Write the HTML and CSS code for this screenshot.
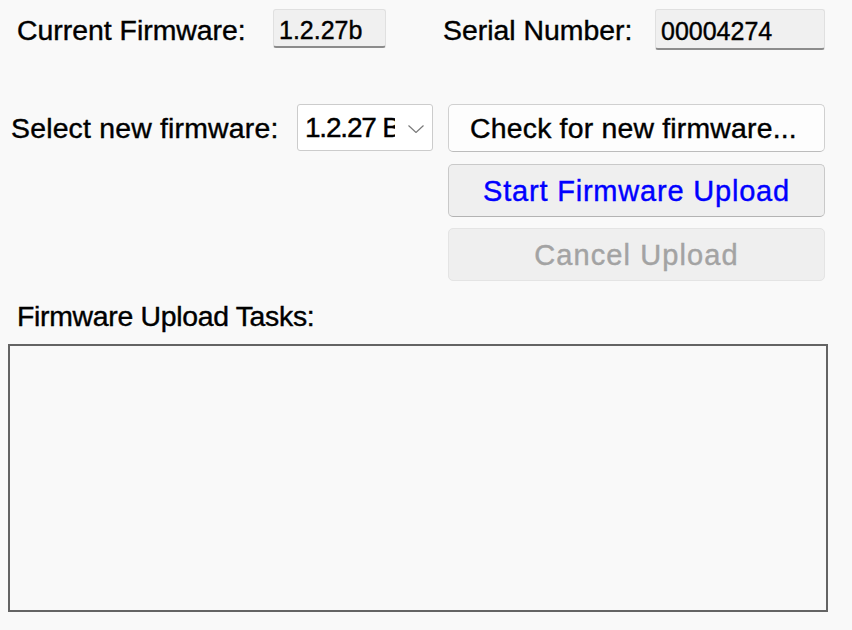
FILE: index.html
```html
<!DOCTYPE html>
<html>
<head>
<meta charset="utf-8">
<link rel="stylesheet" href="styles.css">
</head>
<body>
<div class="page">
  <div class="info-row">
    <div class="label cf-label">Current Firmware:</div>
    <div class="value value-fw">1.2.27b</div>
    <div class="label sn-label">Serial Number:</div>
    <div class="value value-sn">00004274</div>
  </div>

  <div class="select-row">
    <div class="select-group">
      <div class="label sel-label">Select new firmware:</div>
      <div class="select">
        <div class="select-text">1.2.27 Beta</div>
        <svg class="chevron" width="16" height="8" viewBox="0 0 16 8"><polyline points="0.5,0.5 8,7.5 15.5,0.5" fill="none" stroke="#7a7a7a" stroke-width="1.2"/></svg>
      </div>
    </div>
    <div class="buttons">
      <div class="btn btn-check">Check for new firmware...</div>
      <div class="btn btn-start">Start Firmware Upload</div>
      <div class="btn btn-cancel">Cancel Upload</div>
    </div>
  </div>

  <div class="label tasks-label">Firmware Upload Tasks:</div>
  <div class="tasks-box"></div>
</div>
</body>
</html>
```

FILE: styles.css
```css
html, body {
  margin: 0;
  padding: 0;
  background: #f9f9f9;
}
body {
  font-family: "Liberation Sans", Arial, sans-serif;
  color: #000;
  -webkit-text-stroke: 0.4px currentColor;
}
.page {
  width: 852px;
  height: 630px;
  box-sizing: border-box;
  padding-top: 9px;
  overflow: hidden;
}
.label {
  font-size: 28.4px;
  line-height: 32px;
  white-space: nowrap;
}
.info-row {
  display: grid;
  grid-template-columns: 256px 113px 269px 170px;
  align-items: start;
  padding-left: 17px;
  height: 41px;
}
.cf-label, .sn-label {
  padding-top: 5px;
}
.sn-label {
  padding-left: 57px;
}
.value {
  box-sizing: border-box;
  background: #f0f0f0;
  border: 1px solid #e0e0e0;
  border-bottom: 2px solid #8c8c8c;
  border-radius: 3px;
  font-size: 25px;
  line-height: 28px;
  padding-left: 5px;
  white-space: nowrap;
}
.value-fw {
  height: 39px;
  padding-top: 6px;
}
.value-sn {
  height: 41px;
  padding-top: 7px;
}
.select-row {
  display: flex;
  align-items: flex-start;
  margin-top: 54px;
}
.select-group {
  display: flex;
  align-items: center;
  height: 47px;
  padding-left: 11px;
}
.sel-label {
  width: 286px;
  letter-spacing: 0.2px;
}
.select {
  box-sizing: border-box;
  display: flex;
  align-items: center;
  width: 136px;
  height: 47px;
  background: #ffffff;
  border: 1px solid #cccccc;
  border-radius: 3px;
}
.select-text {
  margin-left: 7px;
  width: 90px;
  overflow: hidden;
  white-space: nowrap;
  font-size: 28px;
  line-height: 32px;
  letter-spacing: -1.2px;
}
.chevron {
  margin-left: 13px;
  margin-top: 3px;
}
.buttons {
  display: flex;
  flex-direction: column;
  margin-left: 15px;
  width: 377px;
}
.btn {
  box-sizing: border-box;
  display: flex;
  align-items: center;
  justify-content: center;
  border-radius: 5px;
  font-size: 28.4px;
  line-height: 32px;
  white-space: nowrap;
}
.btn-check {
  height: 48px;
  background: #fdfdfd;
  border: 1px solid #d0d0d0;
  border-bottom-color: #bcbcbc;
  letter-spacing: 0.2px;
  padding-right: 6px;
}
.btn-start {
  height: 53px;
  margin-top: 12px;
  background: #efefef;
  border: 1px solid #c9c9c9;
  border-bottom-color: #b3b3b3;
  color: #0000ff;
  font-size: 29px;
  letter-spacing: 0.8px;
}
.btn-cancel {
  height: 53px;
  margin-top: 11px;
  background: #efefef;
  border: 1px solid #e4e4e4;
  color: #a3a3a3;
  font-size: 29px;
  letter-spacing: 1.1px;
}
.tasks-label {
  margin-top: 19px;
  padding-left: 17px;
  letter-spacing: -0.3px;
}
.tasks-box {
  box-sizing: border-box;
  margin-top: 12px;
  margin-left: 8px;
  width: 820px;
  height: 268px;
  border: 2px solid #646464;
  background: #f9f9f9;
}
```
